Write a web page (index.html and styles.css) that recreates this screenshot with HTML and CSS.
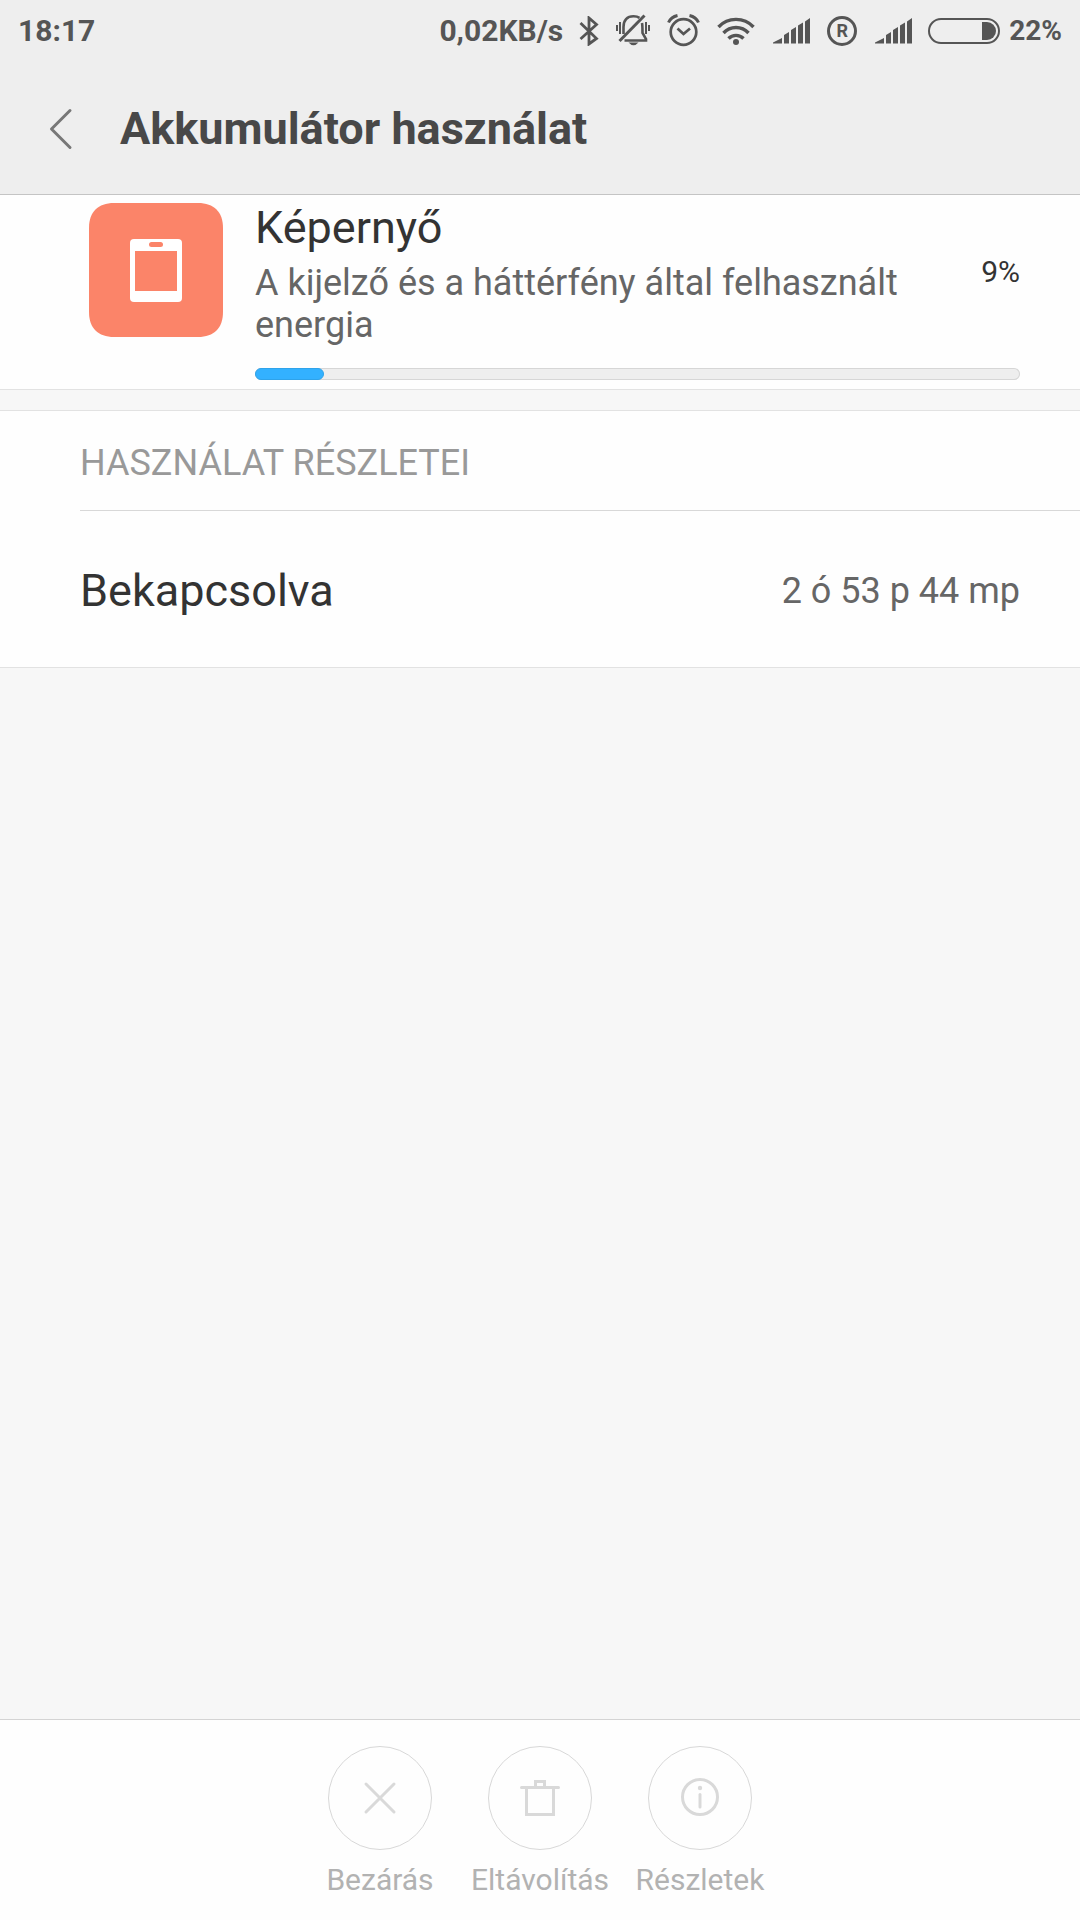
FILE: index.html
```html
<!DOCTYPE html>
<html lang="hu">
<head>
<meta charset="utf-8">
<meta name="viewport" content="width=device-width, initial-scale=1">
<title>Akkumulátor használat</title>
<link rel="stylesheet" href="styles.css">
</head>
<body>
<div class="screen">
  <div class="status-bar">
    <span class="clock">18:17</span>
    <div class="status-icons">
      <span>0,02KB/s</span>
      <svg width="20" height="30" viewBox="0 0 20 30" fill="none" stroke="currentColor" stroke-width="2.8" aria-label="Bluetooth"><path d="M1.5 7 L17.5 22.5 L10 28 V2 L17.5 8.5 L1.5 23"/></svg>
      <svg width="36" height="34" viewBox="0 0 36 34" fill="none" stroke="currentColor" stroke-width="2.6" aria-label="Rezgés">
        <path d="M2 11v6M5 8v12M31 8v12M34 11v6" stroke-width="2"/>
        <path d="M4.5 27 L29.5 1.5" stroke-width="3"/>
        <path d="M8.5 20 V13 C8.5 6 12 2.300 18.5 2.300 C21 2.300 23 2.800 24.5 3.800 M27 9 C27.5 11 27.5 13 27.5 19 L31 25 V26.500 H9.500"/>
        <path d="M13.5 28.5 H23.5 Q18.5 34 13.5 28.5Z" fill="currentColor" stroke="none"/>
      </svg>
      <svg width="33" height="36" viewBox="1 1 33 36" fill="none" stroke="currentColor" stroke-width="2.7" aria-label="Ébresztő">
        <circle cx="17.5" cy="20" r="12.8"/>
        <path d="M11.5 16.5 L17.5 22 L24 16.5"/>
        <path d="M2.500 10.5 Q5 5 11.5 3.5 M23.5 3.5 Q30 5 32.5 10.5" stroke-width="3"/>
      </svg>
      <svg width="40" height="34" viewBox="0 0 40 34" fill="none" stroke="currentColor" stroke-width="3.4" aria-label="Wi-Fi">
        <path d="M2.5 13 A24 24 0 0 1 37.5 13 M7.5 19 A17 17 0 0 1 32.5 19 M12.5 24.5 A10.5 10.5 0 0 1 27.5 24.5"/>
        <circle cx="20" cy="28" r="3" fill="currentColor" stroke="none"/>
      </svg>
      <svg width="39" height="26" viewBox="0 0 39 26" fill="currentColor" aria-label="Térerő"><path d="M1 25.5 V24.5 L10 20 V25.5Z M12 25.5 V17 L17 14 V25.5Z M19 25.5 V12 L24 9 V25.5Z M26 25.5 V7.5 L31 4.5 V25.5Z M33 25.5 V3.5 L38 0 V25.5Z"/></svg>
      <span class="roaming">R</span>
      <svg width="39" height="26" viewBox="0 0 39 26" fill="currentColor" aria-label="Térerő"><path d="M2 25.5 V24.5 L11 20 V25.5Z M13 25.5 V17 L18 14 V25.5Z M20 25.5 V12 L25 9 V25.5Z M27 25.5 V7.5 L32 4.5 V25.5Z M34 25.5 V3.5 L39 0 V25.5Z"/></svg>
      <div class="battery">
        <svg width="72" height="26" viewBox="0 0 72 26" aria-hidden="true"><rect x="1" y="1" width="70" height="24" rx="12" fill="none" stroke="currentColor" stroke-width="2"/><path d="M54 4 H59 A9 9 0 0 1 59 22 H54Z" fill="currentColor"/></svg>
        <span class="battery-level">22%</span>
      </div>
    </div>
  </div>

  <header class="title-bar">
    <button class="back" type="button" aria-label="Vissza">
      <svg width="24" height="42" viewBox="0 0 24 42" fill="none" stroke="currentColor" stroke-width="3" stroke-linecap="round" stroke-linejoin="round"><path d="M21 2.5 L2.5 21 L21 39.5"/></svg>
    </button>
    <h1>Akkumulátor használat</h1>
  </header>

  <main>
    <section class="summary">
      <svg class="app-icon" width="134" height="134" viewBox="0 0 134 134" aria-hidden="true">
        <path fill="#fb8469" d="M25 0 H109 C125 0 134 9 134 25 V109 C134 125 125 134 109 134 H25 C9 134 0 125 0 109 V25 C0 9 9 0 25 0Z"/>
        <rect x="41" y="36" width="52" height="63" rx="4" fill="#fff"/>
        <path fill="#fb8469" d="M46 48 H88 V88 H46Z"/>
        <rect x="60" y="39" width="14" height="5" rx="2.5" fill="#fb8469"/>
      </svg>
      <div class="usage">
        <div class="usage-info">
          <div class="usage-text">
            <h2>Képernyő</h2>
            <p>A kijelző és a háttérfény által felhasznált energia</p>
          </div>
          <label class="percent" for="share">9%</label>
        </div>
        <progress id="share" value="9" max="100"></progress>
      </div>
    </section>

    <section class="details">
      <h3>Használat részletei</h3>
      <dl>
        <dt>Bekapcsolva</dt>
        <dd>2 ó 53 p 44 mp</dd>
      </dl>
    </section>
  </main>

  <footer class="actions">
    <button type="button" disabled>
      <span class="circle"><svg width="44" height="44" viewBox="0 0 44 44"><path d="M8 8 L36 36 M36 8 L8 36"/></svg></span>
      Bezárás
    </button>
    <button type="button" disabled>
      <span class="circle"><svg width="44" height="44" viewBox="0 0 44 44"><path d="M3.5 11.5 H40.5 M8.5 12 V38.5 H35.5 V12 M17.5 11 V5.5 H26.5 V11"/></svg></span>
      Eltávolítás
    </button>
    <button type="button" disabled>
      <span class="circle"><svg width="44" height="44" viewBox="0 0 44 44"><circle cx="22" cy="21" r="17.5"/><path d="M22 18.5 V31"/><circle class="dot" cx="22" cy="12" r="2.2"/></svg></span>
      Részletek
    </button>
  </footer>
</div>
</body>
</html>
```

FILE: styles.css
```css
* {
  box-sizing: border-box;
}

body,
h1,
h2,
h3,
p,
dl,
dd {
  margin: 0;
}

body {
  background: #f7f7f7;
  color: #333;
  font-family: Roboto, "Noto Sans", sans-serif;
}

button {
  padding: 0;
  border: 0;
  background: none;
  color: inherit;
  font: inherit;
}

svg {
  display: block;
  flex: none;
}

.screen {
  display: flex;
  flex-direction: column;
  min-height: 100vh;
}

/* Status bar */
.status-bar {
  display: flex;
  align-items: center;
  justify-content: space-between;
  height: 60px;
  padding: 1px 18px 0;
  background: #eee;
  color: #555;
  font-size: 30px;
  font-weight: 700;
  line-height: 36px;
}

.status-icons {
  display: flex;
  align-items: center;
  gap: 16px;
}

.roaming {
  width: 30px;
  height: 30px;
  border: 3px solid;
  border-radius: 50%;
  font-size: 18px;
  line-height: 24px;
  text-align: center;
}

.battery {
  display: flex;
  align-items: center;
  gap: 9px;
}

.battery-level {
  font-size: 28px;
}

/* Title bar */
.title-bar {
  display: flex;
  align-items: center;
  gap: 47px;
  height: 135px;
  padding: 4px 49px 0;
  border-bottom: 1px solid #c4c4c4;
  background: #eee;
}

.back {
  color: #777;
}

h1 {
  color: #484848;
  font-size: 45px;
  font-weight: 700;
  line-height: 52px;
}

main {
  flex: 1;
}

/* Screen usage summary */
.summary {
  display: flex;
  align-items: flex-start;
  gap: 32px;
  padding: 8px 60px 9px 89px;
  border-bottom: 1px solid #e2e2e2;
  background: #fefefe;
}

.usage {
  flex: 1;
}

.usage-info {
  display: flex;
  align-items: center;
  gap: 60px;
}

.usage-text {
  flex: 1;
}

h2 {
  font-size: 45px;
  font-weight: 400;
  line-height: 50px;
}

p {
  margin-top: 9px;
  color: #666;
  font-size: 36px;
  line-height: 42px;
}

.percent {
  padding-bottom: 6px;
  font-size: 30px;
  line-height: 42px;
}

progress {
  display: block;
  width: 100%;
  height: 12px;
  margin-top: 22px;
  border: 0;
  appearance: none;
}

progress::-webkit-progress-bar {
  border-radius: 6px;
  background: #eee;
  box-shadow: inset 0 0 0 1px #d6d6d6;
}

progress::-webkit-progress-value {
  border: 1px solid #2fa3ea;
  border-radius: 6px;
  background: #33b1ff;
}

/* Usage details */
.details {
  margin-top: 20px;
  padding-left: 80px;
  border: solid #e2e2e2;
  border-width: 1px 0;
  background: #fefefe;
}

h3 {
  padding: 31px 0 26px;
  border-bottom: 1px solid #d8d8d8;
  color: #999;
  font-size: 36px;
  font-weight: 400;
  line-height: 42px;
  text-transform: uppercase;
}

dl {
  display: flex;
  align-items: center;
  justify-content: space-between;
  min-height: 156px;
  padding: 3px 60px 0 0;
}

dt {
  font-size: 45px;
  line-height: 52px;
}

dd {
  color: #666;
  font-size: 36px;
  line-height: 42px;
}

/* Bottom actions */
.actions {
  display: flex;
  justify-content: center;
  padding: 26px 0 22px;
  border-top: 1px solid #d4d4d4;
  background: #fefefe;
}

.actions button {
  display: flex;
  flex-direction: column;
  align-items: center;
  gap: 12px;
  width: 160px;
  color: #b2b2b2;
  font-size: 30px;
  line-height: 36px;
}

.circle {
  display: flex;
  align-items: center;
  justify-content: center;
  width: 104px;
  height: 104px;
  border: 1px solid #d8d8d8;
  border-radius: 50%;
}

.circle svg {
  fill: none;
  stroke: #d9d9d9;
  stroke-width: 3;
  stroke-linecap: round;
}

.circle .dot {
  fill: #d9d9d9;
  stroke: none;
}
```
